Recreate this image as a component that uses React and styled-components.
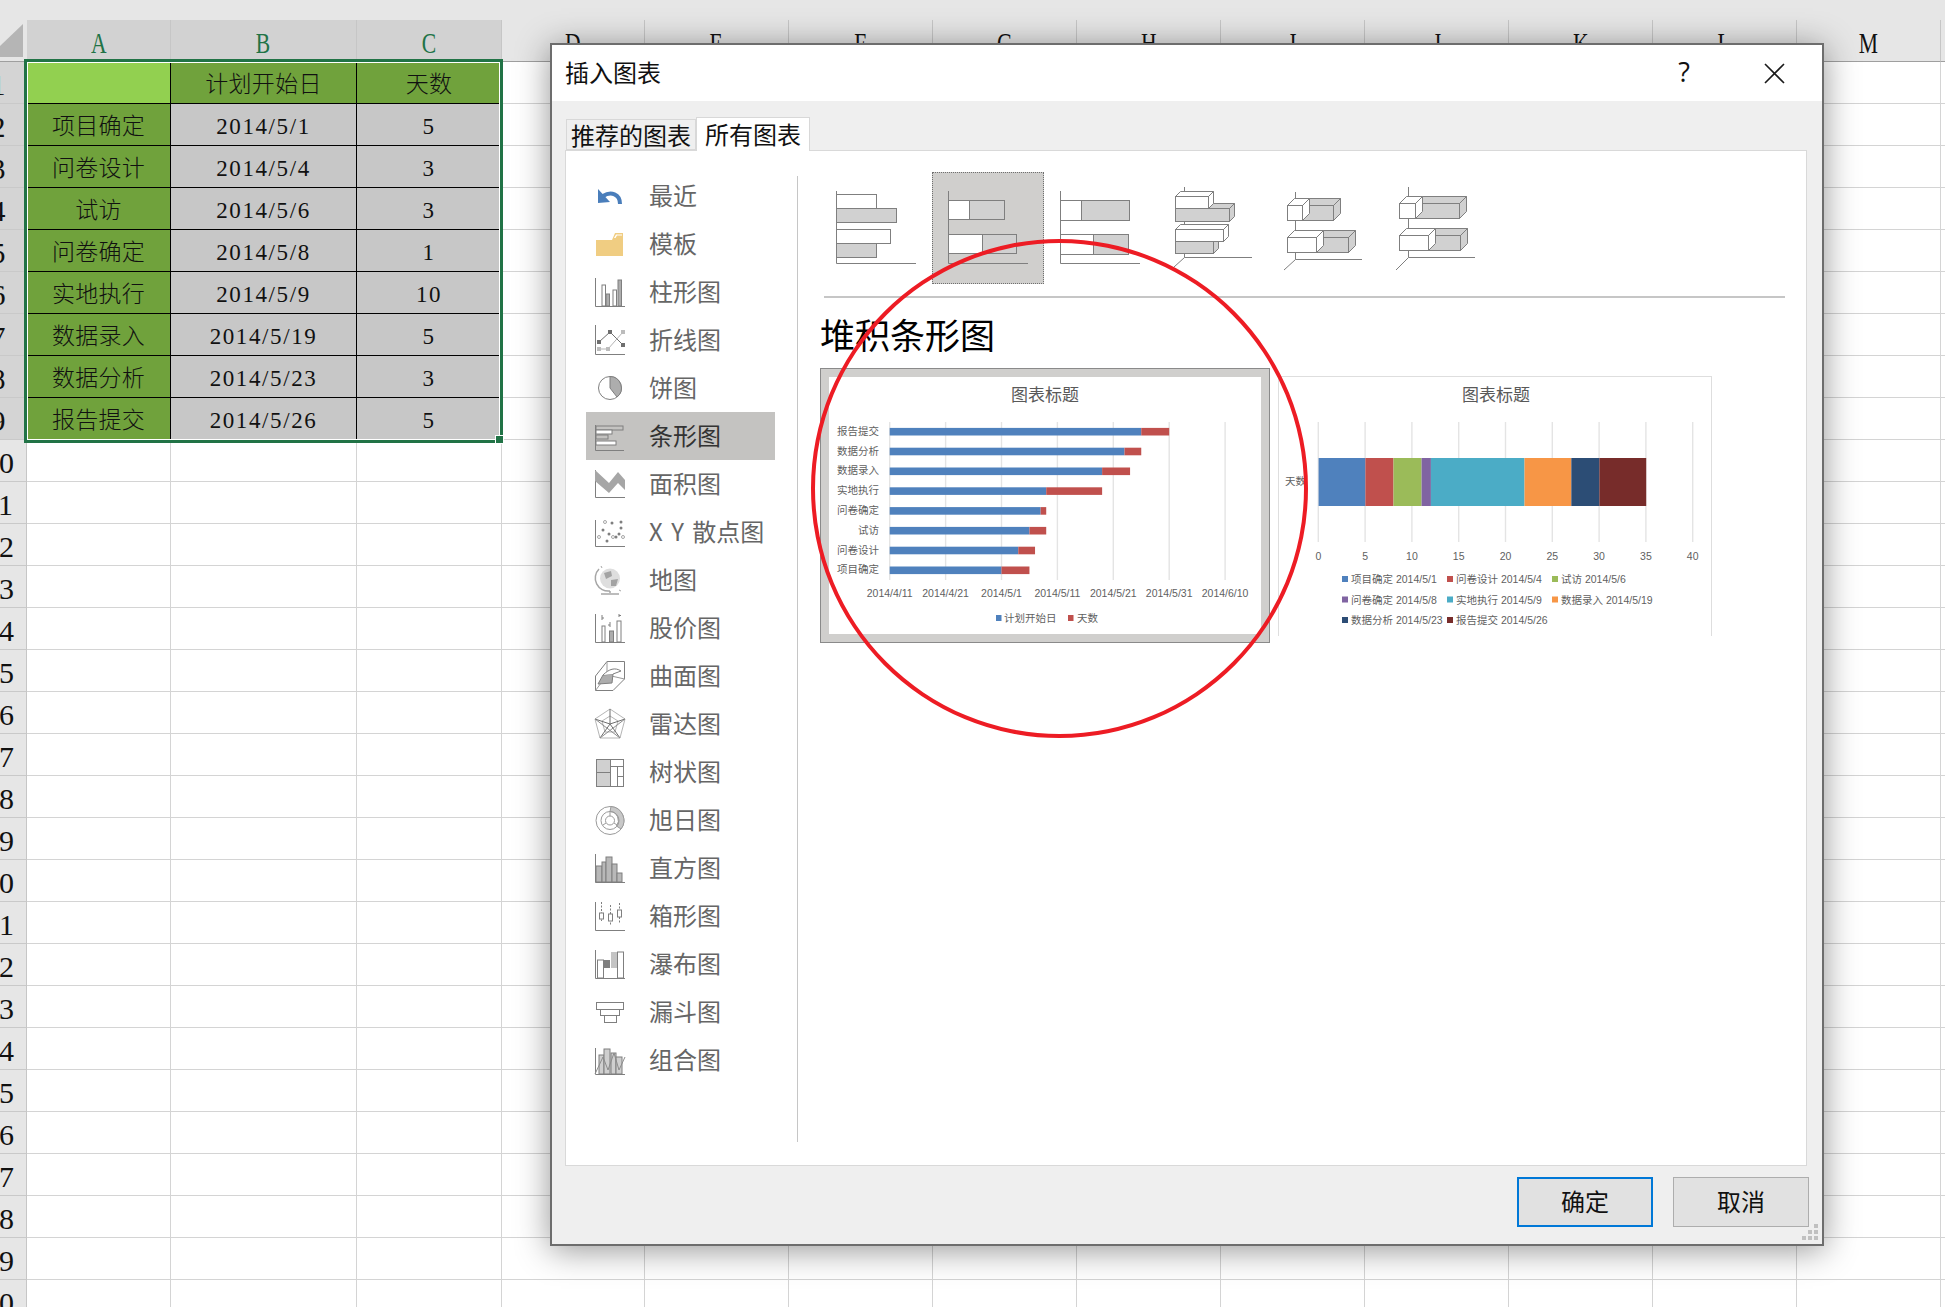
import React from 'react'
import styled, { createGlobalStyle } from 'styled-components'

const GlobalStyle = createGlobalStyle`
html,body{margin:0;padding:0;background:#fff;}
body{width:1945px;height:1307px;overflow:hidden;font-family:"Noto Sans CJK SC","Liberation Sans",sans-serif;}
*{box-sizing:border-box;}
`

const Page = styled.div`
position:relative;
width:1945px;
height:1307px;
overflow:hidden;
background:#fff;
`
const TopStrip = styled.div`
height:20px;
background:#e6e6e6;
`
const SheetRow = styled.div`
display:grid;
grid-template-columns:27px 144px 186px 145px 143px repeat(10,144px);
height:42px;
`
const Corner = styled.div`
background:#e6e6e6;
border-bottom:1px solid #9f9f9f;
display:flex;
align-items:flex-end;
padding-bottom:4px;
`
const ColHead = styled.div`
display:flex;
justify-content:center;
align-items:center;
padding-top:5px;
background:${p => p.$on ? '#d2d2d2' : '#e6e6e6'};
border-right:1px solid #c6c6c6;
border-bottom:1px solid #9f9f9f;
overflow:hidden;
`
const HeadLetter = styled.span`
display:inline-block;
font:30px/1 "Liberation Serif",serif;
transform:scaleX(.72);
color:${p => p.$on ? '#217346' : '#111'};
`
const RowHead = styled.div`
display:flex;
align-items:center;
padding-top:5px;
background:${p => p.$on ? '#d4d4d4' : '#e6e6e6'};
border-bottom:1px solid #c9c9c9;
border-right:1px solid #c6c6c6;
overflow:hidden;
`
const RowNumber = styled.span`
flex:none;
width:28px;
margin-left:-16px;
text-align:center;
white-space:nowrap;
font:30px/1 "Liberation Serif",serif;
color:#111;
`
const Cell = styled.div`
display:flex;
align-items:center;
justify-content:center;
padding-top:3px;
font:23px/1 "Liberation Serif","Noto Sans CJK SC",serif;
font-weight:300;
letter-spacing:${p => p.$num ? 1.6 : 0.3}px;
color:#111;
background:${p => p.$fill || 'transparent'};
border-right:1px solid ${p => p.$fill ? '#000' : '#d4d4d4'};
border-bottom:1px solid ${p => p.$fill ? '#000' : '#d4d4d4'};
`
const Selection = styled.div`
position:absolute;
left:24px;
top:59px;
width:479px;
height:384px;
border:3px solid #217346;
box-shadow:inset 0 0 0 1px #fff;
`
const SelectionHandle = styled.div`
position:absolute;
right:-4px;
bottom:-4px;
width:9px;
height:9px;
background:#217346;
border:1px solid #fff;
`

const Dialog = styled.div`
position:absolute;
left:550px;
top:43px;
width:1274px;
height:1203px;
display:flex;
flex-direction:column;
background:#efefef;
border:2px solid #6d6d6d;
box-shadow:0 4px 32px rgba(0,0,0,.42);
color:#111;
`
const TitleBar = styled.div`
height:56px;
flex:none;
display:flex;
align-items:center;
padding:0 37px 0 13px;
background:#fff;
`
const DialogTitle = styled.div`
font-size:24px;
line-height:1;
margin:0 auto 2px 0;
`
const HelpMark = styled.span`
font:27px/1 "Open Sans",sans-serif;
margin:0 74px 3px 0;
`
const CloseIcon = styled.svg`
width:21px;
height:21px;
display:block;
`
const Tabs = styled.div`
flex:none;
height:49px;
display:flex;
align-items:flex-end;
padding-left:14px;
`
const Tab = styled.div`
height:${p => p.$on ? 34 : 31}px;
margin-bottom:${p => p.$on ? -1 : 0}px;
padding:0 ${p => p.$on ? 8 : 4}px;
position:relative;
z-index:1;
font-size:24px;
line-height:${p => p.$on ? 31 : 30}px;
background:${p => p.$on ? '#fff' : '#efefef'};
border:1px solid #d8d8d8;
border-bottom:${p => p.$on ? 'none' : '1px solid #d8d8d8'};
`
const Panel = styled.div`
flex:none;
height:1016px;
margin:0 15px 0 13px;
display:flex;
padding-left:20px;
background:#fff;
border:1px solid #d9d9d9;
`
const Nav = styled.div`
flex:none;
width:189px;
padding-top:21px;
`
const NavRow = styled.div`
height:48px;
display:flex;
align-items:center;
gap:24px;
padding-left:9px;
font-size:24px;
color:${p => p.$on ? '#333' : '#666'};
background:${p => p.$on ? '#c4c3c1' : 'transparent'};
`
const NavLabel = styled.span`
margin-bottom:3px;
word-spacing:3px;
`
const NavIcon = styled.svg`
flex:none;
width:30px;
height:30px;
display:block;
overflow:visible;
fill:none;
stroke:#7f7f7f;
stroke-width:1;
`
const Divider = styled.div`
flex:none;
width:1px;
margin:25px 0 23px 22px;
background:#c6c6c6;
`
const Content = styled.div`
flex:1;
padding:21px 21px 0 22px;
`
const ThumbRow = styled.div`
display:flex;
`
const Thumb = styled.div`
width:112px;
height:112px;
background:${p => p.$on ? '#d0cfcd' : 'transparent'};
outline:${p => p.$on ? '1px dotted #6f6f6f' : 'none'};
outline-offset:-1px;
`
const ThumbSvg = styled.svg`
display:block;
width:112px;
height:112px;
fill:none;
stroke:#7f7f7f;
stroke-width:1;
`
const Rule = styled.div`
height:2px;
margin:12px 0 0 4px;
background:#c6c6c6;
`
const Heading = styled.div`
margin-top:17px;
font-size:35px;
line-height:38px;
color:#000;
`
const Previews = styled.div`
display:flex;
align-items:flex-start;
gap:8px;
margin:15px 0 0 0;
`
const PickedChart = styled.div`
width:450px;
height:275px;
background:#fff;
border:1px solid #8a8a8a;
outline:8px solid #d0cfcd;
outline-offset:-9px;
padding:8px;
`
const PlainChart = styled.div`
width:434px;
height:260px;
margin-top:8px;
border:1px solid #dedede;
border-bottom:none;
`
const ChartSvg = styled.svg`
display:block;
width:432px;
height:258px;
`
const ChartText = styled.text`
font:${p => p.$size || 10.5}px "Liberation Sans","Noto Sans CJK SC",sans-serif;
fill:${p => p.$title ? '#595959' : '#5f5f5f'};
text-anchor:${p => p.$anchor || 'middle'};
dominant-baseline:central;
`
const Footer = styled.div`
flex:1;
position:relative;
display:flex;
justify-content:flex-end;
gap:20px;
padding:11px 13px 0 0;
`
const Button = styled.div`
width:136px;
height:50px;
display:flex;
align-items:center;
justify-content:center;
padding-bottom:4px;
font-size:24px;
background:#e1e1e1;
border:${p => p.$primary ? '2px solid #0078d7' : '1px solid #adadad'};
`
const Grip = styled.svg`
position:absolute;
right:4px;
bottom:4px;
width:16px;
height:16px;
fill:#c0c0c0;
`
const RedCircle = styled.div`
position:absolute;
left:811px;
top:239px;
width:497px;
height:499px;
border:4px solid #ed1c24;
border-radius:50%;
pointer-events:none;
`

const GREEN = '#70a23c'
const GREY = '#c7c7c7'
const columns = ['A','B','C','D','E','F','G','H','I','J','K','L','M','N']

// name, start date, start in days after 2014/4/11, duration
const tasks = [
  ['项目确定','2014/5/1',20,5],
  ['问卷设计','2014/5/4',23,3],
  ['试访','2014/5/6',25,3],
  ['问卷确定','2014/5/8',27,1],
  ['实地执行','2014/5/9',28,10],
  ['数据录入','2014/5/19',38,5],
  ['数据分析','2014/5/23',42,3],
  ['报告提交','2014/5/26',45,5],
]
const stackColors = ['#4f81bd','#c0504d','#9bbb59','#8064a2','#4bacc6','#f79646','#2c4d75','#772c2a']

function Axis() {
  return <path d="M.5 1V29.5H30" />
}

const G = { fill:'#adadad' }
const W = { fill:'#fff' }

const icons = {
  recent: <g stroke="none" fill="#4a7ebb">
    <path d="M25 23 C25 13 16 10 8 15" fill="none" stroke="#4a7ebb" strokeWidth="4" />
    <polygon points="3,8 3,22 15,21" />
  </g>,
  folder: <g stroke="none">
    <path fill="#f0cd82" d="M1 11H17L20 4H28V27H1Z" />
    <path fill="#fff" d="M19 9 L21 5.500H27V6.500H22L20.500 9Z" />
  </g>,
  column: <g>
    <Axis />
    <rect x="7" y="8" width="3.500" height="21" {...W} />
    <rect x="11" y="17" width="3.500" height="12" {...G} />
    <rect x="18" y="13" width="3.500" height="16" {...W} />
    <rect x="23" y="3" width="3.500" height="26" {...G} />
  </g>,
  line: <g>
    <path d="M.5 0V29.500H30" />
    <path d="M4 17L15 7L28 20" stroke="#6f6f6f" />
    <path d="M4 24H13L28 7" stroke="#b5b5b5" />
    <g stroke="none" fill="#6f6f6f">
      <rect x="2" y="15" width="4" height="4" /><rect x="13" y="5" width="4" height="4" /><rect x="26" y="18" width="4" height="4" />
    </g>
    <g stroke="none" fill="#bcbcbc">
      <rect x="2" y="22" width="4" height="4" /><rect x="11" y="22" width="4" height="4" /><rect x="26" y="5" width="4" height="4" />
    </g>
  </g>,
  pie: <g>
    <circle cx="15" cy="15" r="11.500" fill="#fff" />
    <path d="M15 15V3.500A11.500 11.500 0 0 1 22 24Z" {...G} />
  </g>,
  bar: <g>
    <path d="M.5 4V29.500H29" />
    <rect x="1" y="5" width="27" height="4" fill="#c4c3c1" />
    <rect x="1" y="9" width="16" height="4" {...W} />
    <rect x="1" y="14" width="12" height="4" fill="#c4c3c1" />
    <rect x="1" y="20" width="20" height="4" {...W} />
  </g>,
  area: <g>
    <path d="M.5 1V28.500H30" />
    <polygon points="0,1 14,14 23,3 30,11 30,21 23,14 14,24 0,12" fill="#a6a6a6" stroke="none" />
  </g>,
  scatter: <g>
    <path d="M.5 3V29.500H30" />
    <g stroke="none" fill="#7f7f7f">
      <circle cx="17" cy="6" r="1.500" /><circle cx="26" cy="5" r="1.500" /><circle cx="8" cy="13" r="1.500" /><circle cx="14" cy="17" r="1.500" />
      <circle cx="24" cy="17" r="1.500" /><circle cx="26" cy="11" r="1.500" /><circle cx="12" cy="24" r="1.500" /><circle cx="21" cy="20" r="1.500" />
    </g>
    <g stroke="#a6a6a6">
      <circle cx="10" cy="5" r="1.500" /><circle cx="4" cy="20" r="1.500" /><circle cx="28" cy="20" r="1.500" /><circle cx="18" cy="20" r="1.500" />
    </g>
  </g>,
  map: <g>
    <circle cx="15" cy="13.500" r="10" fill="#dedede" stroke="none" />
    <path d="M9 8 L16 6 L17 11 L11 14Z M16 15 L23 14 L21 21 L16 21Z" fill="#a3a3a3" stroke="none" />
    <path d="M4 4 A13 13 0 0 0 15 26 M15 26V28 M6 29H24" stroke="#a6a6a6" strokeWidth="1.500" />
    <path d="M6 1 L7 3 M24 25L26 26" stroke="#a6a6a6" />
  </g>,
  stock: <g>
    <Axis />
    <path d="M7 2V7M15 9V14M24 1V4M24 2.500H26M15 12H13M7 5H9" />
    <rect x="7" y="13" width="3" height="16" {...W} />
    <rect x="14.500" y="18" width="4" height="11" {...G} />
    <rect x="22" y="8" width="4" height="21" {...W} />
  </g>,
  surface: <g>
    <path d="M.5 29.500H18L29.500 18V.5H12L.5 15Z" />
    <path d="M.5 29.500L12 14L29.500 18M12 .5V14" stroke="#9a9a9a" />
    <polygon points="3,23 8,14 18,13 17,22" {...G} stroke="#7f7f7f" />
    <path d="M8 14C14 8 20 6 26 10L18 13" {...W} />
  </g>,
  radar: <g>
    <polygon points="15,0 30,10 25,29 5,29 0,10" stroke="#b5b5b5" />
    <polygon points="15,7 23,12 20,23 10,23 7,12" stroke="#b5b5b5" />
    <path d="M15 0V15L30 10M15 15L25 29M15 15L5 29M15 15L0 10" stroke="#6f6f6f" />
    <path d="M0 10L25 29M30 10L5 29" stroke="#8c8c8c" />
  </g>,
  treemap: <g>
    <rect x="1.500" y="2.500" width="27" height="27" fill="#fff" />
    <rect x="1.500" y="2.500" width="14" height="13" fill="#d0d0d0" />
    <rect x="1.500" y="15.500" width="14" height="14" fill="#d0d0d0" />
    <path d="M15.500 9.500H28.500M22.500 9.500V29.500M22.500 19.500H28.500" />
  </g>,
  sunburst: <g stroke="#9a9a9a">
    <circle cx="15" cy="15.500" r="14" />
    <path d="M16 1.500A14 14 0 0 1 26 24L21.500 21A9 9 0 0 0 15 6.500Z" fill="#c8c8c8" />
    <circle cx="15" cy="15.500" r="9" />
    <circle cx="15" cy="15.500" r="4.500" />
    <path d="M15 11V6.500M19 18L22 20M11 18L8 20" />
  </g>,
  histogram: <g>
    <Axis />
    <g fill="#b8b8b8">
      <rect x="1" y="13" width="6" height="16" />
      <rect x="7" y="9" width="4" height="20" />
      <rect x="11" y="4" width="6" height="25" />
      <rect x="17" y="11" width="5" height="18" />
      <rect x="22" y="20" width="5" height="9" />
    </g>
  </g>,
  box: <g>
    <Axis />
    <path d="M6.500 1V20M15.500 4V25M24.500 2V22" strokeDasharray="2 1.500" />
    <rect x="4.500" y="12" width="4" height="6" {...W} />
    <rect x="13.500" y="13" width="4" height="7" {...W} />
    <rect x="22.500" y="9" width="4" height="7" {...W} />
  </g>,
  waterfall: <g>
    <Axis />
    <rect x="2.500" y="11" width="6" height="18" {...W} />
    <rect x="9" y="11" width="6" height="8" fill="#7f7f7f" stroke="none" />
    <rect x="16" y="3" width="6" height="16" fill="#c4c4c4" stroke="none" />
    <rect x="22.500" y="3" width="6" height="26" {...W} />
  </g>,
  funnel: <g>
    <rect x="1.500" y="5.500" width="27" height="7" {...W} />
    <rect x="5.500" y="12.500" width="19" height="6" {...W} />
    <rect x="9.500" y="18.500" width="12" height="7" {...W} />
  </g>,
  combo: <g>
    <path d="M.5 3V29.500H30" />
    <g fill="#cfcfcf">
      <rect x="4" y="10" width="5" height="19" />
      <rect x="9" y="4" width="6" height="25" />
      <rect x="16" y="8" width="5" height="21" />
      <rect x="21" y="12" width="6" height="17" />
    </g>
    <path d="M0 29L8 12L13 25L19 8L24 25L30 12" stroke="#8c8c8c" />
  </g>,
}

const navItems = [
  ['recent','最近'],['folder','模板'],['column','柱形图'],['line','折线图'],['pie','饼图'],
  ['bar','条形图'],['area','面积图'],['scatter','X Y 散点图'],['map','地图'],['stock','股价图'],
  ['surface','曲面图'],['radar','雷达图'],['treemap','树状图'],['sunburst','旭日图'],['histogram','直方图'],
  ['box','箱形图'],['waterfall','瀑布图'],['funnel','漏斗图'],['combo','组合图'],
]

function Bar3D({ x, y, w, h, fill, dx = 7, dy = 7 }) {
  return (
    <g fill={fill}>
      <polygon points={`${x},${y} ${x + dx},${y - dy} ${x + w + dx},${y - dy} ${x + w},${y}`} />
      <polygon points={`${x + w},${y} ${x + w + dx},${y - dy} ${x + w + dx},${y + h - dy} ${x + w},${y + h}`} />
      <rect x={x} y={y} width={w} height={h} />
    </g>
  )
}

function Flat({ bars, base = 96 }) {
  return (
    <>
      {bars.map(([x, y, w, h, fill], i) => <rect key={i} x={x} y={y} width={w} height={h} fill={fill} />)}
      <path d={`M16.500 19V91.500H${base}`} />
    </>
  )
}

const WHITE = '#fff'
const FILL = '#d1d1d1'

function Thumbs() {
  return (
    <ThumbRow>
      <Thumb>
        <ThumbSvg><Flat base={96} bars={[[16.5,22.5,40,14,WHITE],[16.5,36.5,60,14,FILL],[16.5,57.5,54,14,WHITE],[16.5,71.5,40,14,FILL]]} /></ThumbSvg>
      </Thumb>
      <Thumb $on>
        <ThumbSvg><Flat bars={[[16.5,28.5,21,19,WHITE],[37.5,28.5,35,19,FILL],[16.5,62.5,34,19,WHITE],[50.5,62.5,34,19,FILL]]} /></ThumbSvg>
      </Thumb>
      <Thumb>
        <ThumbSvg><Flat bars={[[16.5,28.5,21,20,WHITE],[37.5,28.5,48,20,FILL],[16.5,62.5,33,20,WHITE],[49.5,62.5,35,20,FILL]]} /></ThumbSvg>
      </Thumb>
      <Thumb>
        <ThumbSvg>
          <path d="M28.500 15V85.500H96M28.500 85.500L18 95" />
          <Bar3D x={19.5} y={36.5} w={54} h={13} fill={FILL} dx={5} dy={5} />
          <Bar3D x={19.5} y={24.5} w={33} h={12} fill={WHITE} dx={5} dy={5} />
          <Bar3D x={19.5} y={69.5} w={38} h={12} fill={FILL} dx={5} dy={5} />
          <Bar3D x={19.5} y={57.5} w={48} h={12} fill={WHITE} dx={5} dy={5} />
        </ThumbSvg>
      </Thumb>
      <Thumb>
        <ThumbSvg>
          <path d="M27.500 20V87.500H94M27.500 87.500L16 98" />
          <Bar3D x={34.5} y={33.5} w={31} h={15} fill={FILL} />
          <Bar3D x={19.5} y={33.5} w={15} h={15} fill={WHITE} />
          <Bar3D x={48.5} y={65.5} w={32} h={15} fill={FILL} />
          <Bar3D x={19.5} y={65.5} w={29} h={15} fill={WHITE} />
        </ThumbSvg>
      </Thumb>
      <Thumb>
        <ThumbSvg>
          <path d="M28.500 15V85.500H95M28.500 85.500L16 98" />
          <Bar3D x={35.5} y={31.5} w={44} h={15} fill={FILL} />
          <Bar3D x={19.5} y={31.5} w={16} h={15} fill={WHITE} />
          <Bar3D x={48.5} y={63.5} w={32} h={15} fill={FILL} />
          <Bar3D x={19.5} y={63.5} w={29} h={15} fill={WHITE} />
        </ThumbSvg>
      </Thumb>
    </ThumbRow>
  )
}

function GanttChart() {
  const dayX = d => 60.7 + d * 5.59
  const dates = ['2014/4/11','2014/4/21','2014/5/1','2014/5/11','2014/5/21','2014/5/31','2014/6/10']
  const rows = [...tasks].reverse()
  return (
    <ChartSvg viewBox="0 0 432 258">
      <ChartText $title $size={17} x="216" y="18">图表标题</ChartText>
      {dates.map((d, i) => {
        const x = dayX(i * 10)
        return (
          <g key={d}>
            <line x1={x} x2={x} y1="45" y2="203" stroke="#e4e4e4" strokeWidth="1.400" />
            <ChartText x={x} y="216">{d}</ChartText>
          </g>
        )
      })}
      {rows.map(([name, , start, days], i) => {
        const y = 54.7 + i * 19.8
        return (
          <g key={name}>
            <ChartText $anchor="end" x="50" y={y - 1}>{name}</ChartText>
            <rect x={dayX(0)} y={y - 3.8} width={start * 5.59} height="7.600" fill="#4f81bd" />
            <rect x={dayX(start)} y={y - 3.8} width={days * 5.59} height="7.600" fill="#c0504d" />
          </g>
        )
      })}
      <rect x="167" y="238" width="5.500" height="6" fill="#4f81bd" />
      <ChartText $anchor="start" x="175" y="241">计划开始日</ChartText>
      <rect x="239" y="238" width="5.500" height="6" fill="#c0504d" />
      <ChartText $anchor="start" x="248" y="241">天数</ChartText>
    </ChartSvg>
  )
}

function StackChart() {
  const unit = 9.36
  const ticks = [0,5,10,15,20,25,30,35,40]
  let sum = 0
  return (
    <ChartSvg viewBox="0 0 432 258">
      <ChartText $title $size={17} x="217" y="18">图表标题</ChartText>
      {ticks.map(t => {
        const x = 39.3 + t * unit
        return (
          <g key={t}>
            <line x1={x} x2={x} y1="45" y2="165" stroke="#e4e4e4" strokeWidth="1.400" />
            <ChartText x={x} y="179">{t}</ChartText>
          </g>
        )
      })}
      <ChartText $anchor="end" x="27" y="104">天数</ChartText>
      {tasks.map(([name, , , days], i) => {
        const x = 39.6 + sum * unit
        sum += days
        return <rect key={name} x={x} y="81" width={days * unit} height="48" fill={stackColors[i]} />
      })}
      {tasks.map(([name, date], i) => {
        const x = 63 + (i % 3) * 105
        const y = 202 + Math.floor(i / 3) * 20.5
        return (
          <g key={name}>
            <rect x={x} y={y - 3} width="6" height="6" fill={stackColors[i]} />
            <ChartText $anchor="start" x={x + 9} y={y}>{name} {date}</ChartText>
          </g>
        )
      })}
    </ChartSvg>
  )
}

function Sheet() {
  return (
    <>
      <TopStrip />
      <SheetRow>
        <Corner>
          <svg width="23" height="33"><polygon points="0,33 23,33 23,0 0,22" fill="#b5b5b5" /></svg>
        </Corner>
        {columns.map((c, i) => (
          <ColHead key={c} $on={i < 3}>
            {c !== 'N' && <HeadLetter $on={i < 3}>{c}</HeadLetter>}
          </ColHead>
        ))}
      </SheetRow>
      {Array.from({ length: 30 }, (_, i) => {
        const n = i + 1
        const task = i >= 1 && i <= 8 ? tasks[i - 1] : null
        const picked = n <= 9
        return (
          <SheetRow key={n}>
            <RowHead $on={picked}><RowNumber>{n}</RowNumber></RowHead>
            {n === 1 && <>
              <Cell $fill="#92d050" />
              <Cell $fill={GREEN}>计划开始日</Cell>
              <Cell $fill={GREEN}>天数</Cell>
            </>}
            {task && <>
              <Cell $fill={GREEN}>{task[0]}</Cell>
              <Cell $fill={GREY} $num>{task[1]}</Cell>
              <Cell $fill={GREY} $num>{task[3]}</Cell>
            </>}
            {!picked && <><Cell /><Cell /><Cell /></>}
            {columns.slice(3).map(c => <Cell key={c} />)}
          </SheetRow>
        )
      })}
      <Selection><SelectionHandle /></Selection>
    </>
  )
}

export default function App() {
  return (
    <Page>
      <GlobalStyle />
      <Sheet />
      <Dialog>
        <TitleBar>
          <DialogTitle>插入图表</DialogTitle>
          <HelpMark>?</HelpMark>
          <CloseIcon viewBox="0 0 21 21"><path d="M1 1L20 20M20 1L1 20" stroke="#1a1a1a" strokeWidth="1.600" /></CloseIcon>
        </TitleBar>
        <Tabs>
          <Tab>推荐的图表</Tab>
          <Tab $on>所有图表</Tab>
        </Tabs>
        <Panel>
          <Nav>
            {navItems.map(([icon, label]) => (
              <NavRow key={icon} $on={icon === 'bar'}>
                <NavIcon viewBox="0 0 30 30">{icons[icon]}</NavIcon>
                <NavLabel>{label}</NavLabel>
              </NavRow>
            ))}
          </Nav>
          <Divider />
          <Content>
            <Thumbs />
            <Rule />
            <Heading>堆积条形图</Heading>
            <Previews>
              <PickedChart><GanttChart /></PickedChart>
              <PlainChart><StackChart /></PlainChart>
            </Previews>
          </Content>
        </Panel>
        <Footer>
          <Button $primary>确定</Button>
          <Button>取消</Button>
          <Grip viewBox="0 0 16 16">
            <rect x="12" y="0" width="4" height="4" />
            <rect x="6" y="6" width="4" height="4" /><rect x="12" y="6" width="4" height="4" />
            <rect x="0" y="12" width="4" height="4" /><rect x="6" y="12" width="4" height="4" /><rect x="12" y="12" width="4" height="4" />
          </Grip>
        </Footer>
      </Dialog>
      <RedCircle />
    </Page>
  )
}
